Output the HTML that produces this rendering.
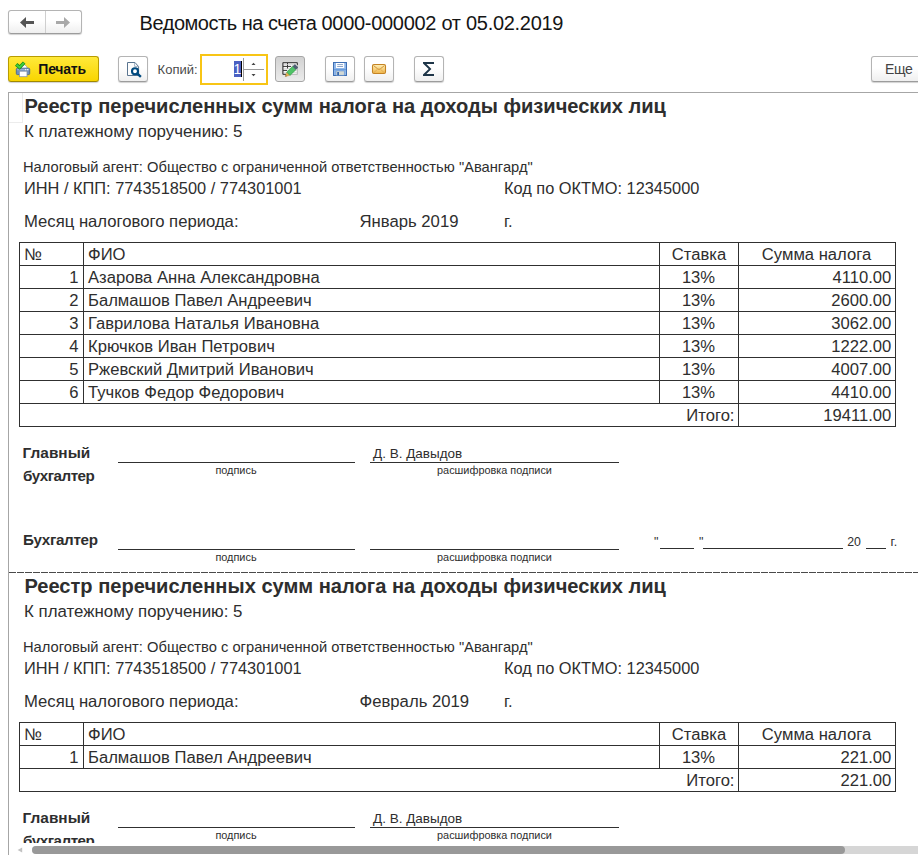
<!DOCTYPE html>
<html><head><meta charset="utf-8">
<style>
html,body{margin:0;padding:0;background:#fff;}
body{width:918px;height:855px;overflow:hidden;position:relative;font-family:"Liberation Sans",sans-serif;color:#2e2e2e;}
.t{position:absolute;white-space:nowrap;line-height:normal;color:#2e2e2e;}
.b{font-weight:bold;}
.l{position:absolute;}
.btn{position:absolute;box-sizing:border-box;border:1px solid #b4b4b4;border-bottom-color:#9c9c9c;border-radius:3px;background:linear-gradient(#ffffff 0%,#ffffff 45%,#efefef 100%);box-shadow:0 1px 1px rgba(0,0,0,0.18);}
#doc{position:absolute;left:0;top:0;width:918px;height:843px;overflow:hidden;}
</style></head>
<body>
<!-- toolbar -->
<div class="btn" style="left:8px;top:10px;width:74px;height:24px;"></div>
<div class="l" style="left:45px;top:11px;width:1px;height:22px;background:#cfcfcf"></div>
<div class="t" style="left:139.6px;top:11.9px;font-size:20px;letter-spacing:-0.47px;color:#151515">Ведомость на счета <span style="letter-spacing:-0.29px">0000-000002 от 05.02.2019</span></div>

<div class="btn" style="left:8px;top:56px;width:91px;height:26px;background:linear-gradient(#ffe93a,#f9d500);border-color:#b89c00;border-bottom-color:#a08800;"></div>
<div class="t b" style="left:38.3px;top:61.2px;font-size:14px;letter-spacing:-0.22px;color:#111">Печать</div>

<div class="btn" style="left:118px;top:56px;width:30px;height:26px;"></div>
<div class="t" style="left:157.6px;top:62.1px;font-size:13px;letter-spacing:0px;color:#4a4a4a">Копий:</div>
<div class="l" style="left:200px;top:54px;width:68px;height:31px;box-sizing:border-box;border:2px solid #f8c515;background:#fff"></div>
<div class="l" style="left:234px;top:61px;width:7px;height:16px;background:#4a60c2"></div>
<div class="l" style="left:241px;top:61px;width:1px;height:16px;background:#000"></div>
<div class="t" style="left:233.6px;top:61.3px;font-size:14px;color:#fff">1</div>
<div class="l" style="left:243px;top:58px;width:1px;height:23px;background:#9a9a9a"></div>
<div class="l" style="left:244px;top:69px;width:20px;height:1px;background:#9a9a9a"></div>
<div class="btn" style="left:275px;top:56px;width:30px;height:26px;background:linear-gradient(#d2d2d2,#ebebeb);border-color:#a6a6a6;box-shadow:none"></div>
<div class="btn" style="left:325px;top:56px;width:30px;height:26px;"></div>
<div class="btn" style="left:364px;top:56px;width:30px;height:26px;"></div>
<div class="btn" style="left:414px;top:56px;width:30px;height:26px;"></div>
<div class="btn" style="left:871px;top:56px;width:60px;height:26px;"></div>
<div class="t" style="left:885px;top:61.1px;font-size:14px;letter-spacing:-0.35px;color:#444">Еще</div>

<svg style="position:absolute;left:0;top:0" width="918" height="90" viewBox="0 0 918 90">
<!-- nav arrows -->
<path d="M20 22.5 L26 17 L26 21 L34 21 L34 24 L26 24 L26 28 Z" fill="#555"/>
<path d="M70 22.5 L64 17 L64 21 L56 21 L56 24 L64 24 L64 28 Z" fill="#a9a9a9"/>
<!-- printer -->
<g>
<path d="M21.5 69 V66.2 L24.6 64.6 L27 67 V69 Z" fill="#fff" stroke="#9aa7b5" stroke-width="0.8"/>
<rect x="16.3" y="68.2" width="13.4" height="6.4" rx="1.2" fill="#6f8fbd" stroke="#486690" stroke-width="0.9"/>
<rect x="17" y="68.8" width="12" height="1.5" fill="#93add2"/>
<rect x="25" y="69.2" width="1.2" height="1" fill="#fff"/><rect x="27" y="69.2" width="1.2" height="1" fill="#fff"/>
<rect x="19.4" y="71.2" width="7.6" height="5.5" fill="#fff" stroke="#8a98aa" stroke-width="0.8"/>
<path d="M16.2 64.4 L19.6 67.4 L24.2 62.6" fill="none" stroke="#178a17" stroke-width="3.5" stroke-linecap="butt"/>
<path d="M16.5 64.7 L19.6 67.4 L23.9 62.9" fill="none" stroke="#3fd03f" stroke-width="2.0" stroke-linecap="butt"/>
</g>
<!-- preview -->
<g>
<path d="M127.5 62.5 H135 L138.6 66.6 V75.5 H127.5 Z" fill="#fdfdfd" stroke="#5a7590" stroke-width="1"/>
<path d="M134.6 62.8 V66.4 H138.3" fill="none" stroke="#8aa0b5" stroke-width="0.8"/>
<circle cx="135" cy="71.2" r="3" fill="#fff" stroke="#004a7f" stroke-width="2.1"/>
<path d="M137.4 73.6 L140 76" stroke="#004a7f" stroke-width="2.4" stroke-linecap="square"/>
</g>
<!-- spinner arrows -->
<path d="M251.5 65 L253.5 62.8 L255.5 65 Z" fill="#444"/>
<path d="M251.5 74 L253.5 76.2 L255.5 74 Z" fill="#444"/>
<!-- edit table + pencil -->
<g>
<rect x="282.9" y="62.7" width="14.4" height="11.6" fill="#fafafa" stroke="#b5b5b5" stroke-width="1"/>
<path d="M282.9 74.3 V62.7 H297.3 V65" fill="none" stroke="#333" stroke-width="1"/>
<path d="M282.9 74.3 H286" fill="none" stroke="#333" stroke-width="1"/>
<path d="M283 66.4 H291 M283 70.4 H287" stroke="#333" stroke-width="1"/>
<path d="M287.5 63 V69" stroke="#333" stroke-width="1"/>
<path d="M291 66.4 H297 M287 70.4 H297 M292.5 63 V66 M284 68.4 H297 M284 72.4 H297 M284 64.5 H297" stroke="#cfcfcf" stroke-width="0.7"/>
<g transform="translate(285.3 76.6) rotate(-43.5)">
<path d="M0 0 L4.2 -2.2 L4.2 2.2 Z" fill="#e9b04e" stroke="#b98a3a" stroke-width="0.4"/>
<path d="M0 0 L1.4 -0.75 L1.4 0.75 Z" fill="#6b5a3a"/>
<rect x="4.2" y="-2.3" width="8.2" height="4.6" fill="#4fc366" stroke="#2f9a46" stroke-width="0.6"/>
<rect x="12.3" y="-2.4" width="3.4" height="4.8" rx="0.8" fill="#4f6072"/>
</g>
</g>
<!-- save -->
<g>
<rect x="333.5" y="62.5" width="13" height="13" fill="#8fb7ea" stroke="#3f6fb3" stroke-width="1"/>
<rect x="334" y="69" width="12" height="1.2" fill="#6a9ddc"/>
<rect x="336" y="63" width="8.2" height="5" fill="#fff"/>
<path d="M337.2 64.6 H343 M337.2 66.5 H343" stroke="#7f9cc4" stroke-width="0.9"/>
<rect x="336" y="71" width="8.2" height="4.2" fill="#d3d9d4" stroke="#5f8fcf" stroke-width="0.5"/>
<rect x="337.2" y="72" width="1.8" height="3.2" fill="#3566ad"/>
</g>
<!-- mail -->
<defs><linearGradient id="mg" x1="0" y1="0" x2="0" y2="1"><stop offset="0" stop-color="#fff0b8"/><stop offset="1" stop-color="#f0b548"/></linearGradient></defs>
<g>
<rect x="372.5" y="64.5" width="13" height="9" rx="1.4" fill="url(#mg)" stroke="#c48324" stroke-width="1.1"/>
<path d="M373.6 65.6 L377.6 68.8 Q379 70 380.4 68.8 L384.4 65.6" fill="none" stroke="#c88a30" stroke-width="0.9"/>
<path d="M373.8 72.6 L377.4 69.4 M384.2 72.6 L380.6 69.4" fill="none" stroke="#d9a04a" stroke-width="0.7"/>
</g>
<!-- sigma -->
<path d="M423 62 H434 V64 H426.4 L431.4 69 L426.4 74 H434 V76 H423 V74.5 L428.7 69 L423 63.5 Z" fill="#1e3548"/>
</svg>

<div id="doc">
<div class="l" style="left:8px;top:92px;width:910px;height:1px;background:#a6a6a6"></div>
<div class="l" style="left:8px;top:92px;width:1px;height:760px;background:#a6a6a6"></div>
<div class="l" style="left:9px;top:122px;width:14px;height:1px;background:#ececec"></div>
<div class="l" style="left:22px;top:93px;width:1px;height:30px;background:#ececec"></div>
<div class="t b" style="left:24.4px;top:94.82px;font-size:20.09px;">Реестр перечисленных сумм налога на доходы физических лиц</div>
<div class="t " style="left:24px;top:121.72px;font-size:16.88px;">К платежному поручению: 5</div>
<div class="t " style="left:23px;top:158.69px;font-size:14.71px;">Налоговый агент: Общество с ограниченной ответственностью "Авангард"</div>
<div class="t " style="left:24px;top:179.19px;font-size:16.36px;">ИНН / КПП: 7743518500 / 774301001</div>
<div class="t " style="left:504px;top:179.18px;font-size:16.38px;">Код по ОКТМО: 12345000</div>
<div class="t " style="left:24px;top:211.90px;font-size:16.68px;">Месяц налогового периода:</div>
<div class="t " style="left:359.5px;top:211.89px;font-size:16.7px;">Январь 2019</div>
<div class="t " style="left:504px;top:212.02px;font-size:16.55px;">г.</div>
<div class="l" style="left:19px;top:242px;width:877px;height:1px;background:#303030"></div>
<div class="l" style="left:19px;top:265px;width:877px;height:1px;background:#303030"></div>
<div class="l" style="left:19px;top:288px;width:877px;height:1px;background:#303030"></div>
<div class="l" style="left:19px;top:311px;width:877px;height:1px;background:#303030"></div>
<div class="l" style="left:19px;top:334px;width:877px;height:1px;background:#303030"></div>
<div class="l" style="left:19px;top:357px;width:877px;height:1px;background:#303030"></div>
<div class="l" style="left:19px;top:380px;width:877px;height:1px;background:#303030"></div>
<div class="l" style="left:19px;top:403px;width:877px;height:1px;background:#303030"></div>
<div class="l" style="left:19px;top:426px;width:877px;height:1px;background:#303030"></div>
<div class="l" style="left:19px;top:242px;width:1px;height:185px;background:#303030"></div>
<div class="l" style="left:895px;top:242px;width:1px;height:185px;background:#303030"></div>
<div class="l" style="left:83px;top:242px;width:1px;height:162px;background:#303030"></div>
<div class="l" style="left:659px;top:242px;width:1px;height:162px;background:#303030"></div>
<div class="l" style="left:738px;top:242px;width:1px;height:185px;background:#303030"></div>
<div class="t " style="left:24px;top:244.96px;font-size:16.62px;">№</div>
<div class="t " style="left:88px;top:244.96px;font-size:16.62px;">ФИО</div>
<div class="t " style="left:499px;width:400px;text-align:center;top:244.96px;font-size:16.62px;">Ставка</div>
<div class="t " style="left:616.5px;width:400px;text-align:center;top:244.96px;font-size:16.62px;">Сумма налога</div>
<div class="t " style="right:839.5px;top:267.96px;font-size:16.62px;">1</div>
<div class="t " style="left:88px;top:267.96px;font-size:16.62px;">Азарова Анна Александровна</div>
<div class="t " style="left:498.5px;width:400px;text-align:center;top:267.96px;font-size:16.62px;">13%</div>
<div class="t " style="right:26.700000000000045px;top:267.96px;font-size:16.62px;">4110.00</div>
<div class="t " style="right:839.5px;top:290.96px;font-size:16.62px;">2</div>
<div class="t " style="left:88px;top:290.96px;font-size:16.62px;">Балмашов Павел Андреевич</div>
<div class="t " style="left:498.5px;width:400px;text-align:center;top:290.96px;font-size:16.62px;">13%</div>
<div class="t " style="right:26.700000000000045px;top:290.96px;font-size:16.62px;">2600.00</div>
<div class="t " style="right:839.5px;top:313.96px;font-size:16.62px;">3</div>
<div class="t " style="left:88px;top:313.96px;font-size:16.62px;">Гаврилова Наталья Ивановна</div>
<div class="t " style="left:498.5px;width:400px;text-align:center;top:313.96px;font-size:16.62px;">13%</div>
<div class="t " style="right:26.700000000000045px;top:313.96px;font-size:16.62px;">3062.00</div>
<div class="t " style="right:839.5px;top:336.96px;font-size:16.62px;">4</div>
<div class="t " style="left:88px;top:336.96px;font-size:16.62px;">Крючков Иван Петрович</div>
<div class="t " style="left:498.5px;width:400px;text-align:center;top:336.96px;font-size:16.62px;">13%</div>
<div class="t " style="right:26.700000000000045px;top:336.96px;font-size:16.62px;">1222.00</div>
<div class="t " style="right:839.5px;top:359.96px;font-size:16.62px;">5</div>
<div class="t " style="left:88px;top:359.96px;font-size:16.62px;">Ржевский Дмитрий Иванович</div>
<div class="t " style="left:498.5px;width:400px;text-align:center;top:359.96px;font-size:16.62px;">13%</div>
<div class="t " style="right:26.700000000000045px;top:359.96px;font-size:16.62px;">4007.00</div>
<div class="t " style="right:839.5px;top:382.96px;font-size:16.62px;">6</div>
<div class="t " style="left:88px;top:382.96px;font-size:16.62px;">Тучков Федор Федорович</div>
<div class="t " style="left:498.5px;width:400px;text-align:center;top:382.96px;font-size:16.62px;">13%</div>
<div class="t " style="right:26.700000000000045px;top:382.96px;font-size:16.62px;">4410.00</div>
<div class="t " style="right:183.5px;top:405.96px;font-size:16.62px;">Итого:</div>
<div class="t " style="right:26.700000000000045px;top:405.96px;font-size:16.62px;">19411.00</div>
<div class="t b" style="left:22.6px;top:443.66px;font-size:15.4px;">Главный</div>
<div class="t b" style="left:23px;top:467.24px;font-size:15.2px;letter-spacing:-0.5px">бухгалтер</div>
<div class="l" style="left:118px;top:462px;width:237px;height:1px;background:#303030"></div>
<div class="t " style="left:36px;width:400px;text-align:center;top:464.14px;font-size:10.9px;">подпись</div>
<div class="t " style="left:373px;top:446.38px;font-size:13.5px;">Д. В. Давыдов</div>
<div class="l" style="left:370px;top:462px;width:249px;height:1px;background:#303030"></div>
<div class="t " style="left:294.5px;width:400px;text-align:center;top:464.14px;font-size:10.9px;">расшифровка подписи</div>
<div class="t b" style="left:23px;top:531.24px;font-size:15.2px;letter-spacing:-0.3px">Бухгалтер</div>
<div class="l" style="left:118px;top:549px;width:237px;height:1px;background:#303030"></div>
<div class="t " style="left:36px;width:400px;text-align:center;top:551.14px;font-size:10.9px;">подпись</div>
<div class="l" style="left:370px;top:549px;width:249px;height:1px;background:#303030"></div>
<div class="t " style="left:294.5px;width:400px;text-align:center;top:551.14px;font-size:10.9px;">расшифровка подписи</div>
<div class="t " style="left:654px;top:534.99px;font-size:12.5px;">"</div>
<div class="l" style="left:660px;top:548px;width:34px;height:1px;background:#303030"></div>
<div class="t " style="left:699px;top:534.99px;font-size:12.5px;">"</div>
<div class="l" style="left:703px;top:548px;width:140px;height:1px;background:#303030"></div>
<div class="t " style="left:847.2px;top:535.17px;font-size:12.3px;">20</div>
<div class="l" style="left:866px;top:548px;width:20px;height:1px;background:#303030"></div>
<div class="t " style="left:890.6px;top:534.99px;font-size:12.5px;">г.</div>
<div class="t b" style="left:24.4px;top:574.82px;font-size:20.09px;">Реестр перечисленных сумм налога на доходы физических лиц</div>
<div class="t " style="left:24px;top:601.72px;font-size:16.88px;">К платежному поручению: 5</div>
<div class="t " style="left:23px;top:638.69px;font-size:14.71px;">Налоговый агент: Общество с ограниченной ответственностью "Авангард"</div>
<div class="t " style="left:24px;top:659.19px;font-size:16.36px;">ИНН / КПП: 7743518500 / 774301001</div>
<div class="t " style="left:504px;top:659.18px;font-size:16.38px;">Код по ОКТМО: 12345000</div>
<div class="t " style="left:24px;top:691.90px;font-size:16.68px;">Месяц налогового периода:</div>
<div class="t " style="left:359.5px;top:691.89px;font-size:16.7px;">Февраль 2019</div>
<div class="t " style="left:504px;top:692.02px;font-size:16.55px;">г.</div>
<div class="l" style="left:19px;top:722px;width:877px;height:1px;background:#303030"></div>
<div class="l" style="left:19px;top:745px;width:877px;height:1px;background:#303030"></div>
<div class="l" style="left:19px;top:768px;width:877px;height:1px;background:#303030"></div>
<div class="l" style="left:19px;top:791px;width:877px;height:1px;background:#303030"></div>
<div class="l" style="left:19px;top:722px;width:1px;height:70px;background:#303030"></div>
<div class="l" style="left:895px;top:722px;width:1px;height:70px;background:#303030"></div>
<div class="l" style="left:83px;top:722px;width:1px;height:47px;background:#303030"></div>
<div class="l" style="left:659px;top:722px;width:1px;height:47px;background:#303030"></div>
<div class="l" style="left:738px;top:722px;width:1px;height:70px;background:#303030"></div>
<div class="t " style="left:24px;top:724.96px;font-size:16.62px;">№</div>
<div class="t " style="left:88px;top:724.96px;font-size:16.62px;">ФИО</div>
<div class="t " style="left:499px;width:400px;text-align:center;top:724.96px;font-size:16.62px;">Ставка</div>
<div class="t " style="left:616.5px;width:400px;text-align:center;top:724.96px;font-size:16.62px;">Сумма налога</div>
<div class="t " style="right:839.5px;top:747.96px;font-size:16.62px;">1</div>
<div class="t " style="left:88px;top:747.96px;font-size:16.62px;">Балмашов Павел Андреевич</div>
<div class="t " style="left:498.5px;width:400px;text-align:center;top:747.96px;font-size:16.62px;">13%</div>
<div class="t " style="right:26.700000000000045px;top:747.96px;font-size:16.62px;">221.00</div>
<div class="t " style="right:183.5px;top:770.96px;font-size:16.62px;">Итого:</div>
<div class="t " style="right:26.700000000000045px;top:770.96px;font-size:16.62px;">221.00</div>
<div class="t b" style="left:22.6px;top:808.66px;font-size:15.4px;">Главный</div>
<div class="t b" style="left:23px;top:832.24px;font-size:15.2px;letter-spacing:-0.5px">бухгалтер</div>
<div class="l" style="left:118px;top:827px;width:237px;height:1px;background:#303030"></div>
<div class="t " style="left:36px;width:400px;text-align:center;top:829.14px;font-size:10.9px;">подпись</div>
<div class="t " style="left:373px;top:811.38px;font-size:13.5px;">Д. В. Давыдов</div>
<div class="l" style="left:370px;top:827px;width:249px;height:1px;background:#303030"></div>
<div class="t " style="left:294.5px;width:400px;text-align:center;top:829.14px;font-size:10.9px;">расшифровка подписи</div>
<div class="t b" style="left:23px;top:896.24px;font-size:15.2px;letter-spacing:-0.3px">Бухгалтер</div>
<div class="l" style="left:118px;top:914px;width:237px;height:1px;background:#303030"></div>
<div class="t " style="left:36px;width:400px;text-align:center;top:916.14px;font-size:10.9px;">подпись</div>
<div class="l" style="left:370px;top:914px;width:249px;height:1px;background:#303030"></div>
<div class="t " style="left:294.5px;width:400px;text-align:center;top:916.14px;font-size:10.9px;">расшифровка подписи</div>
<div class="t " style="left:654px;top:899.99px;font-size:12.5px;">"</div>
<div class="l" style="left:660px;top:913px;width:34px;height:1px;background:#303030"></div>
<div class="t " style="left:699px;top:899.99px;font-size:12.5px;">"</div>
<div class="l" style="left:703px;top:913px;width:140px;height:1px;background:#303030"></div>
<div class="t " style="left:847.2px;top:900.17px;font-size:12.3px;">20</div>
<div class="l" style="left:866px;top:913px;width:20px;height:1px;background:#303030"></div>
<div class="t " style="left:890.6px;top:899.99px;font-size:12.5px;">г.</div>
</div>
<!-- page break dashed -->
<div class="l" style="left:9px;top:572px;width:909px;height:1px;background:repeating-linear-gradient(90deg,#4a4a4a 0 7px,transparent 7px 8px)"></div>
<!-- scrollbar -->
<div class="l" style="left:8px;top:843px;width:1px;height:12px;background:#a6a6a6"></div>
<svg style="position:absolute;left:14px;top:845px" width="12" height="10" viewBox="0 0 12 10"><path d="M3.6 5 L8.2 2.4 L8.2 7.6 Z" fill="#c2c2c2"/></svg>
<div class="l" style="left:32px;top:846px;width:886px;height:8px;background:#d6d6d6;border-radius:4px 0 0 4px"></div>
<div class="l" style="left:32px;top:846px;width:813px;height:8px;background:#999999;border-radius:4px"></div>
</body></html>
